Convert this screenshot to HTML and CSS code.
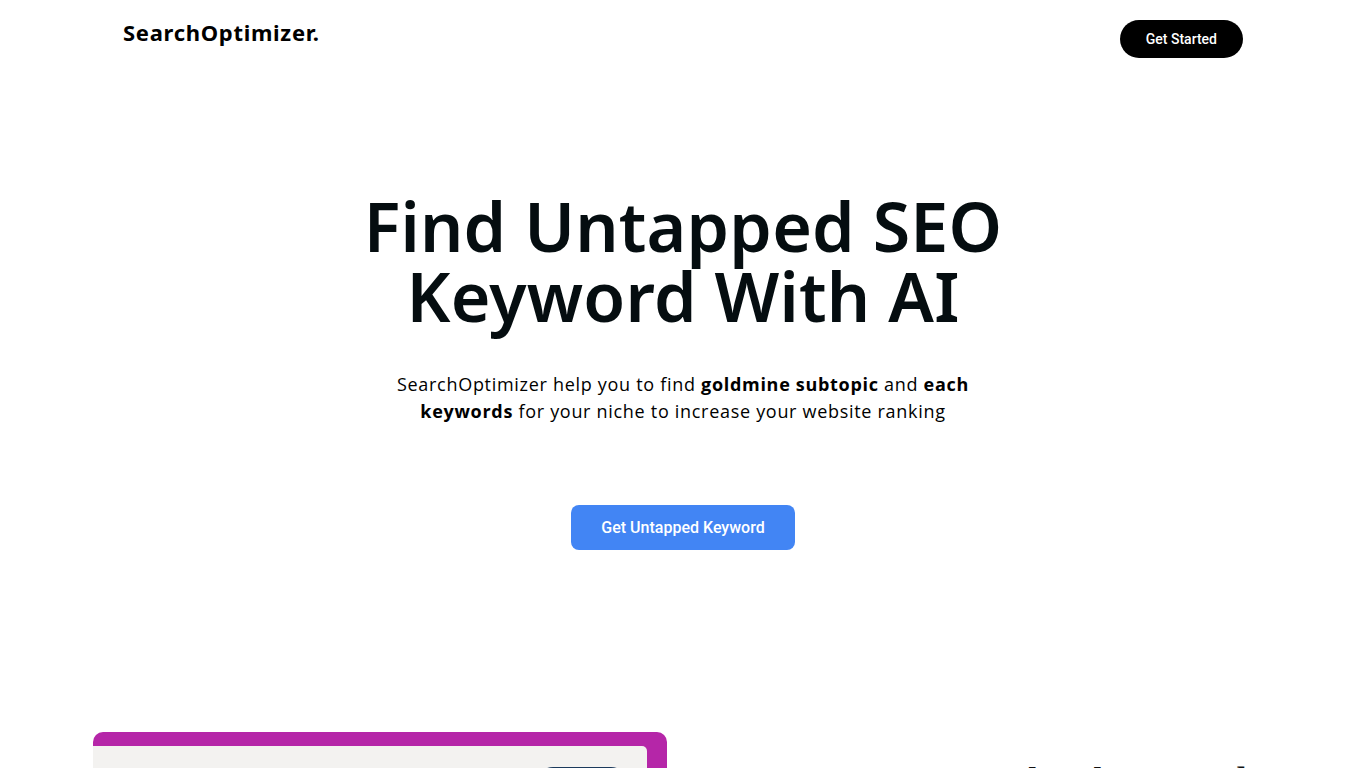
FILE: index.html
```html
<!DOCTYPE html>
<html lang="en">
<head>
  <meta charset="UTF-8">
  <title>SearchOptimizer - Find Untapped SEO Keyword With AI</title>
  <link rel="stylesheet" href="styles.css">
</head>
<body>

<header class="nav">
  <a class="logo" href="#">SearchOptimizer.</a>
  <a class="btn-dark" href="#">Get Started</a>
</header>

<section class="hero">
  <h1>Find Untapped SEO<br>Keyword With AI</h1>
  <p class="lead">SearchOptimizer help you to find <strong>goldmine subtopic</strong> and <strong>each keywords</strong> for your niche to increase your website ranking</p>
  <a class="btn-blue" href="#">Get Untapped Keyword</a>
</section>

<section class="feature">
  <div class="preview">
    <div class="preview-inner">
      <span class="pill"></span>
    </div>
  </div>
  <div class="feature-text">
    <h2>Stop guessing what keywords to target</h2>
  </div>
</section>

</body>
</html>
```

FILE: styles.css
```css
body {
  margin: 0;
  background-color: #fff;
  color: #000;
  font-family: "Open Sans", "Liberation Sans", sans-serif;
}
a {
  text-decoration: none;
}
.nav {
  max-width: 1120px;
  margin: 0 auto;
  padding-top: 20px;
  display: flex;
  justify-content: space-between;
  align-items: flex-start;
}
.logo {
  font-family: "Noto Sans", sans-serif;
  font-weight: 700;
  font-size: 22px;
  line-height: 24px;
  color: #000;
  letter-spacing: 0.7px;
}
.btn-dark {
  display: flex;
  align-items: center;
  height: 38px;
  padding: 0 26px;
  border-radius: 20px;
  background-color: #000;
  color: #fff;
  font-family: Roboto, sans-serif;
  font-weight: 500;
  font-size: 14px;
}
.hero {
  display: flex;
  flex-direction: column;
  align-items: center;
  text-align: center;
  padding-top: 133px;
}
h1 {
  margin: 0;
  font-family: "Noto Sans", sans-serif;
  font-weight: 600;
  font-size: 68px;
  line-height: 70px;
  color: #050d10;
  letter-spacing: 0.2px;
}
.lead {
  max-width: 600px;
  margin: 40px 0 0;
  font-size: 18px;
  line-height: 27px;
  letter-spacing: 0.7px;
  color: #000;
}
.lead strong {
  font-weight: 700;
}
.btn-blue {
  display: flex;
  align-items: center;
  justify-content: center;
  width: 224px;
  height: 45px;
  margin-top: 80px;
  border-radius: 8px;
  background-color: #4285f4;
  color: #fff;
  font-family: Roboto, sans-serif;
  font-weight: 500;
  font-size: 16px;
}
.feature {
  max-width: 1180px;
  margin: 182px auto 0;
  display: flex;
  gap: 13px;
}
.preview {
  width: 554px;
  padding: 14px 20px 0 0;
  background-color: #b526a8;
  border-radius: 10px 10px 0 0;
}
.preview-inner {
  height: 300px;
  padding: 21px 21px 0 0;
  background-color: #f3f2f0;
  border-top-right-radius: 5px;
  display: flex;
  justify-content: flex-end;
}
.pill {
  width: 88px;
  height: 30px;
  border-radius: 15px;
  background-color: #1b3a5c;
}
.feature-text {
  flex: 1;
  padding-top: 26px;
}
h2 {
  margin: 0 0 0 60px;
  font-family: "Liberation Serif", serif;
  font-weight: 400;
  font-size: 44px;
  line-height: 52px;
  color: #111;
}
```
